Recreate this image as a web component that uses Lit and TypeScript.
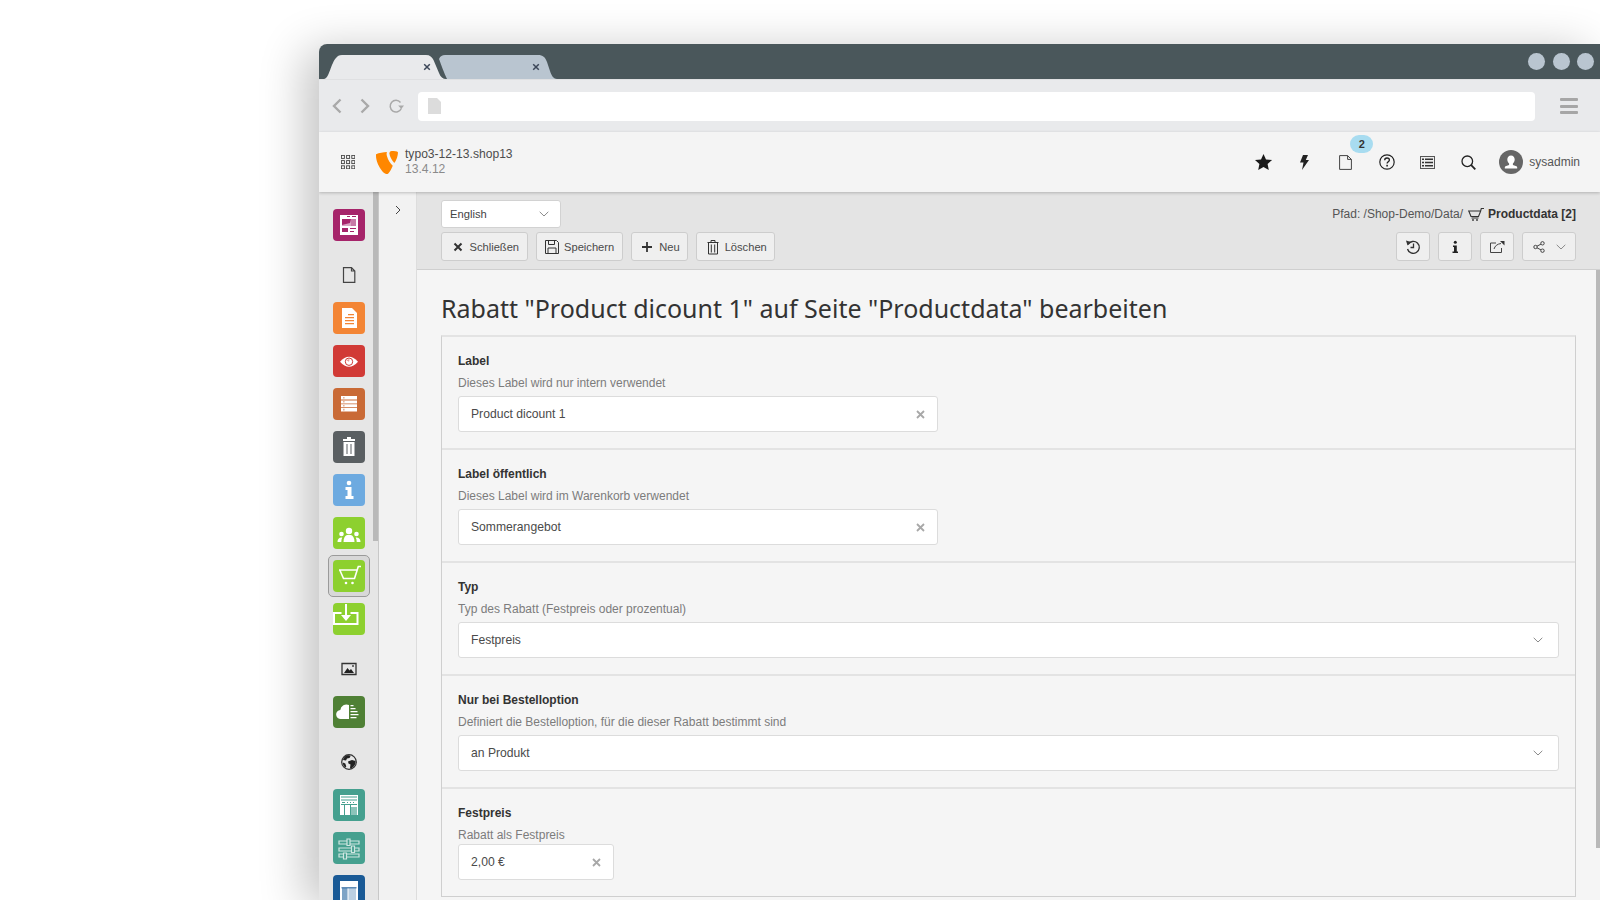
import { LitElement, html, css, svg } from "lit";
import { customElement } from "lit/decorators.js";

const tileIcons = {
  web: svg`<path d="M7 6h18v20H7z" fill="#fff"/><path d="M9 10h14v7H9z" fill="#d9a3c2"/><path d="M9 10h9l-1 4-8 2z" fill="#a6246a"/><path d="M18 10h5v7h-5z" fill="#c77aa6"/><path d="M9 19h6v4H9zM17 19h6v1h-6zM17 22h4v1h-4z" fill="#a6246a"/><path d="M14 7h3v1h-3zM19 7h4v1h-4z" fill="#a6246a"/>`,
  doc: svg`<path d="M9 6h10l5 5v15H9z" fill="#fff"/><path d="M12 15h9v1.300h-9zM12 18h9v1.300h-9zM12 21h9v1.300h-9zM15 12h6v1.300h-6z" fill="#f38535"/>`,
  eye: svg`<path d="M7 16.700c3-3.400 6-5 9-5s6 1.600 9 5c-3 3.400-6 5-9 5s-6-1.600-9-5z" fill="#fff"/><circle cx="16" cy="16.700" r="3.700" fill="#fff" stroke="#d13a36" stroke-width="1"/><path d="M13.800 15.500a2.400 2.400 0 0 1 2.800-1.200l-.6 2.400z" fill="#e99a97"/>`,
  list: svg`<path d="M8 8h16v15.500H8z" fill="#fff"/><path d="M8 11.600h16v.8H8zM8 15.400h16v.8H8zM8 19.200h16v.8H8z" fill="#c96a36"/><path d="M10.500 9h.8v1.600h-.8zM10.500 13h.8v1.600h-.8zM10.500 17h.8v1.600h-.8zM10.500 20.800h.8v1.600h-.8z" fill="#c96a36"/>`,
  trash: svg`<path d="M10 8h12v2h-12z M14 6h4v2h-4z" fill="#fff"/><path d="M10.500 11h11v14h-11z" fill="#fff"/><path d="M13.500 13h1v10h-1zM17.500 13h1v10h-1z" fill="#5a5f62"/>`,
  info: svg`<circle cx="16" cy="9" r="2.300" fill="#fff"/><path d="M12.500 13h6v9h2v3h-8v-3h2v-6h-2z" fill="#fff"/>`,
  users: svg`<circle cx="16" cy="14" r="3.200" fill="#fff"/><path d="M10.500 25c0-4 1.500-6.500 3.500-7h4c2 .5 3.500 3 3.500 7z" fill="#fff"/><circle cx="8.500" cy="17" r="2.300" fill="#fff"/><path d="M4.500 25c0-2.800 1.500-4.500 4-4.500h.8c-.7 1.300-1 2.800-1 4.500z" fill="#fff"/><circle cx="23.500" cy="17" r="2.300" fill="#fff"/><path d="M27.500 25c0-2.800-1.500-4.500-4-4.500h-.8c.7 1.300 1 2.800 1 4.500z" fill="#fff"/>`,
  cart: svg`<path d="M6 10h18M7 10.500l3.500 8h11l3-9.500.8-2.500H28" fill="none" stroke="#fff" stroke-width="1.600"/><circle cx="13" cy="23" r="1.300" fill="#fff"/><circle cx="19.500" cy="23" r="1.300" fill="#fff"/>`,
  import: svg`<path d="M0 10h8.500v2H2v9h21.500v-9h-6v-2H25.500v13H0z" fill="#fff" transform="translate(0 -1)"/><path d="M12 1h2v11h4l-5 6-5-6h4z" fill="#fff"/>`,
  cloud: svg`<path d="M8 23a4.500 4.500 0 0 1-.7-9 6.200 6.200 0 0 1 8.700-5v14z" fill="#fff"/><path d="M17.500 9h3v1.300h-3zM17.500 12h5v1.300h-5zM17.500 15h7v1.300h-7zM17.500 18h8v1.300h-8zM17.500 21h6v1.300h-6z" fill="#fff"/>`,
  form: svg`<path d="M7 6h18v20H7z" fill="#fff"/><path d="M8 7.500h16v1H8zM8 10.500h16v1H8z" fill="#45a08f"/><path d="M9 13h3v1H9zM14 13h1v1h-1zM17 13h1v1h-1zM20 13h1v1h-1zM8 15h16v1H8z" fill="#45a08f"/><path d="M11 16h1v10h-1zM17 16h1v10h-1z" fill="#45a08f"/><path d="M18 18h6v8h-6z" fill="#8cc4ba"/>`,
  sliders: svg`<path d="M6 9h20v3H6zM6 16h20v3H6zM6 22h20v3H6z" fill="none" stroke="#cfe6e1" stroke-width="1.200"/><path d="M14 7h3v6.500h-3zM18.500 14h3v6.500h-3zM10.500 21h3v6h-3z" fill="#45a08f" stroke="#cfe6e1" stroke-width="1.200"/>`,
  layout: svg`<path d="M7 6h18v23H7z" fill="#fff"/><path d="M9 13h5.500v14H9z" fill="#7ea4c6"/><path d="M15.500 13H23v14h-7.500z" fill="#bcd0e2"/><path d="M8.500 12.300h15v1h-15z" fill="#1a5a96"/>`,
};

const tiles: { k?: keyof typeof tileIcons; c?: string; plain?: string; active?: boolean }[] = [
  { k: "web", c: "#a6246a" },
  { plain: "page" },
  { k: "doc", c: "#f38535" },
  { k: "eye", c: "#d13a36" },
  { k: "list", c: "#c96a36" },
  { k: "trash", c: "#5a5f62" },
  { k: "info", c: "#6daae0" },
  { k: "users", c: "#8dd02f" },
  { k: "cart", c: "#8dd02f", active: true },
  { k: "import", c: "#8dd02f" },
  { plain: "image" },
  { k: "cloud", c: "#4f8035" },
  { plain: "globe" },
  { k: "form", c: "#45a08f" },
  { k: "sliders", c: "#45a08f" },
  { k: "layout", c: "#1a5a96" },
];

const plainIcons: Record<string, unknown> = {
  page: html`<svg width="14" height="16" viewBox="0 0 14 16"><path d="M1.500.7h8l3.300 3.300v11.300H1.500z M9.500.7V4h3.300" fill="none" stroke="#444" stroke-width="1.200"/></svg>`,
  image: html`<svg width="16" height="14" viewBox="0 0 16 14"><path d="M1 1.500h14v11H1z" fill="none" stroke="#333" stroke-width="1.300"/><path d="M3 11l3.500-5 2 2.500 1.500-1.500 3 4z" fill="#222"/><circle cx="12" cy="4" r="1" fill="#444"/></svg>`,
  globe: html`<svg width="16" height="16" viewBox="0 0 16 16"><circle cx="8" cy="8" r="7.300" fill="none" stroke="#333" stroke-width="1.200"/><path d="M5 1.800c2-.8 4-.5 4.500.5L8.500 4 6 4.500 5 6.500 2 6c.5-2 1.500-3.300 3-4.200zM7 7.500l4-1.500 3.500 1c.3 3-1 5.500-3 6.500L10 15l-1-1 .5-3.500L7.500 9.500zM1.800 8.500l2.500 1 1 3-1 1c-1.500-1-2.500-3-2.500-5z" fill="#222"/></svg>`,
};

const fields = [
  { label: "Label", desc: "Dieses Label wird nur intern verwendet", value: "Product dicount 1", type: "input" },
  { label: "Label öffentlich", desc: "Dieses Label wird im Warenkorb verwendet", value: "Sommerangebot", type: "input" },
  { label: "Typ", desc: "Typ des Rabatt (Festpreis oder prozentual)", value: "Festpreis", type: "select" },
  { label: "Nur bei Bestelloption", desc: "Definiert die Bestelloption, für die dieser Rabatt bestimmt sind", value: "an Produkt", type: "select" },
  { label: "Festpreis", desc: "Rabatt als Festpreis", value: "2,00 €", type: "price" },
];

const chevron = html`<svg width="10" height="6" viewBox="0 0 10 6"><path d="M.7.8 5 5 9.300.8" fill="none" stroke="#8a8a8a" stroke-width="1"/></svg>`;
const clearX = html`<svg width="9" height="9" viewBox="0 0 9 9"><path d="M1 1l7 7M8 1 1 8" stroke="#a8a8a8" stroke-width="1.800"/></svg>`;
const tabX = html`<svg width="8" height="8" viewBox="0 0 8 8"><path d="M1.200 1.200l5.600 5.600M6.800 1.200 1.200 6.800" stroke="#3c4759" stroke-width="1.500"/></svg>`;
const cartSmall = html`<svg width="16" height="13" viewBox="0 0 16 13"><path d="M0 3h12.500M1 3.500l2 5h7.500l2-5 .8-3H16M3.500 10h7" fill="none" stroke="#333" stroke-width="1.100"/><circle cx="5" cy="12" r=".9" fill="#333"/><circle cx="9" cy="12" r=".9" fill="#333"/></svg>`;

@customElement("app-root")
export class AppRoot extends LitElement {
  static styles = css`
    :host { display: block; height: 900px; overflow: hidden; background: #fff; font-family: "Liberation Sans", Arial, sans-serif; padding: 44px 0 0 319px; box-sizing: border-box; }
    .win { height: 856px; display: flex; flex-direction: column; border-radius: 8px 0 0 0; box-shadow: -14px 6px 46px rgba(0,0,0,.24); background: #f5f5f5; overflow: hidden; }
    .chrome { height: 35px; flex: none; background: #4a575b; display: flex; align-items: flex-end; padding-left: 5px; }
    .tab { height: 24px; position: relative; flex: none; display: flex; align-items: center; justify-content: flex-end; box-sizing: border-box; }
    .tab svg.bg { position: absolute; inset: 0; }
    .tab svg:not(.bg) { position: relative; }
    .tab1 { width: 122px; z-index: 1; padding-right: 15px; }
    .tab2 { width: 118px; margin-left: -7px; padding-right: 17px; padding-bottom: 1px; }
    .dots { margin-left: auto; display: flex; gap: 7.500px; padding-right: 6px; align-self: center; }
    .dots i { width: 17px; height: 17px; border-radius: 50%; background: #b9c5d0; display: block; }
    .toolbar { height: 53px; flex: none; background: #e9eaec; display: flex; align-items: center; border-top: 1px solid #dfe0e2; box-sizing: border-box; padding-left: 13px; }
    .nav { display: flex; align-items: center; gap: 18px; width: 86px; }
    .addr { width: 1117px; height: 29px; background: #fff; border-radius: 4px; display: flex; align-items: center; padding-left: 10px; box-sizing: border-box; }
    .burger { margin-left: 25px; display: flex; flex-direction: column; gap: 3.500px; }
    .burger i { display: block; width: 18px; height: 3px; background: #a6a6a6; border-radius: 1px; }
    .top { height: 60px; flex: none; background: #f4f4f4; display: flex; align-items: center; padding: 0 20px 0 22px; position: relative; z-index: 2; box-shadow: 0 1px 3px rgba(0,0,0,.22); }
    .brand { margin-left: 21px; display: flex; align-items: center; gap: 7px; }
    .brandtxt { font-size: 12.100px; line-height: 14.500px; color: #4d4d4d; margin-top: -1px; }
    .brandtxt small { display: block; font-size: 12.100px; color: #8a8a8a; }
    .tools { margin-left: auto; display: flex; align-items: center; }
    .slot { width: 41px; display: flex; justify-content: center; position: relative; }
    .badge { position: absolute; left: 25px; top: -20px; width: 23px; height: 18px; border-radius: 9px; background: #a8dcf0; color: #333; font-size: 11px; font-weight: 700; display: flex; align-items: center; justify-content: center; }
    .user { margin-left: 10px; display: flex; align-items: center; gap: 6px; font-size: 12px; color: #555; }
    .main { flex: 1; min-height: 0; display: flex; }
    .menu { width: 60px; flex: none; background: #e6e6e6; position: relative; border-right: 1px solid #c8c8c8; box-sizing: border-box; display: flex; flex-direction: column; align-items: center; gap: 11px; padding-top: 17px; overflow: hidden; isolation: isolate; }
    .menu .sb { position: absolute; right: 0; top: 0; width: 5px; height: 349px; background: #b9b9b9; }
    .tile { width: 32px; height: 32px; border-radius: 4px; flex: none; display: flex; position: relative; }
    .tile svg { display: block; }
    .tile.on::after { content: ""; position: absolute; inset: -5px; border: 1px solid #9a9a9a; border-radius: 5px; background: rgba(0,0,0,.06); z-index: -1; }
    .plain { width: 32px; height: 32px; flex: none; margin-top: 7px; display: flex; align-items: center; justify-content: center; }
    .rail { width: 38px; flex: none; background: #f2f2f2; border-right: 1px solid #ddd; box-sizing: border-box; display: flex; justify-content: center; padding-top: 13px; }
    .rail svg { display: block; }
    .content { flex: 1; min-width: 0; display: flex; flex-direction: column; }
    .doc { height: 78px; flex: none; background: #e4e4e4; border-bottom: 1px solid #cfcfcf; box-sizing: border-box; padding: 8px 24px 0 24px; display: flex; flex-direction: column; gap: 4px; }
    .row { display: flex; justify-content: space-between; align-items: center; }
    .lang { width: 120px; height: 28px; box-sizing: border-box; background: #fff; border: 1px solid #d2d2d2; border-radius: 3px; display: flex; align-items: center; justify-content: space-between; padding: 0 11px 0 8px; font-size: 11.200px; color: #444; }
    .path { font-size: 12px; color: #555; display: flex; align-items: center; gap: 5px; }
    .path b { color: #333; margin-left: -1px; }
    .btns { display: flex; gap: 8px; }
    .btn { height: 29px; box-sizing: border-box; background: #efefef; border: 1px solid #cdcdcd; border-radius: 3px; display: flex; align-items: center; gap: 4px; padding: 0 7.500px; font-size: 11.150px; color: #4a4a4a; flex: none; }
    .btn.sq { width: 34px; padding: 0; justify-content: center; }
    .btn.sh { width: 54px; padding: 0; justify-content: center; gap: 11px; }
    .body { flex: 1; min-height: 0; position: relative; padding: 0 24px; background: #f5f5f5; overflow: hidden; }
    .sbar { position: absolute; right: 0; top: 0; width: 4px; height: 578px; background: #b9b9b9; }
    h1 { margin: 0; height: 65px; display: flex; align-items: center; font: 400 25px "Noto Sans", sans-serif; color: #333; padding-top: 11px; box-sizing: border-box; }
    .panel { border: 1px solid #cfcfcf; border-top: 2px solid #e3e3e3; }
    .sec { padding: 17px 16px 16px 16px; border-bottom: 2px solid #e3e3e3; }
    .sec:last-child { border-bottom: 0; }
    .lab { font-size: 12px; font-weight: 700; line-height: 14px; color: #333; margin-bottom: 8px; }
    .desc { font-size: 12px; line-height: 14px; color: #7c7c7c; margin-bottom: 6px; }
    .sec:last-child .desc { margin-bottom: 2px; }
    .ctl { height: 36px; box-sizing: border-box; background: #fff; border: 1.500px solid #dcdcdc; border-radius: 3px; display: flex; align-items: center; justify-content: space-between; padding: 0 12px; font-size: 12.150px; color: #4a4a4a; }
    .ctl.input { width: 480px; }
    .ctl.price { width: 156px; }
    .ctl.select { padding-right: 15px; }
  `;

  render() {
    return html`
      <div class="win">
        <div class="chrome">
          <div class="tab tab1">
            <svg class="bg" width="122" height="24" viewBox="0 0 122 24"><path d="M0 24C5 24 7 8 12 3 13.500 1 15 0 18 0H102C106 0 108 2 109.500 5L115 18C116.500 22 119 24 122 24Z" fill="#e9eaec"/></svg>
            ${tabX}
          </div>
          <div class="tab tab2">
            <svg class="bg" width="118" height="24" viewBox="0 0 118 24"><path d="M0 4C1.500 1 3 0 6 0H99C104 0 106 2 108 7L111 16C112.500 21 115 24 118 24H8C5 18 2 9 0 4Z" fill="#b9c5d0"/></svg>
            ${tabX}
          </div>
          <div class="dots"><i></i><i></i><i></i></div>
        </div>
        <div class="toolbar">
          <div class="nav">
            <svg width="10" height="16" viewBox="0 0 10 16"><path d="M8.500 1.500 2 8l6.500 6.500" fill="none" stroke="#a9a9a9" stroke-width="2.400"/></svg>
            <svg width="10" height="16" viewBox="0 0 10 16"><path d="M1.500 1.500 8 8l-6.500 6.500" fill="none" stroke="#a9a9a9" stroke-width="2.400"/></svg>
            <svg width="16" height="16" viewBox="0 0 16 16"><path d="M13.300 10.500A5.800 5.800 0 1 1 12.500 4.500" fill="none" stroke="#a9a9a9" stroke-width="1.500"/><path d="M10.200 7.500H16L13.300 11z" fill="#a9a9a9"/></svg>
          </div>
          <div class="addr">
            <svg width="13" height="16" viewBox="0 0 13 16"><path d="M0 0h9l4 4v12H0z" fill="#dcdcdc"/></svg>
          </div>
          <div class="burger"><i></i><i></i><i></i></div>
        </div>
        <div class="top">
          <svg width="14" height="14" viewBox="0 0 14 14">
            ${[0, 5.2, 10.4].map((y) => [0, 5.2, 10.4].map((x) => svg`<rect x="${x + 0.4}" y="${y + 0.4}" width="3" height="3" fill="none" stroke="#444" stroke-width=".9"/>`))}
          </svg>
          <div class="brand">
            <svg width="22" height="23" viewBox="0 0 21 22"><path d="M0 3C3 1.800 7 1.200 10.500 1 10 2 10 3.500 10.500 5 11.500 8.500 13.500 12 16 14 14.500 18 12 22 10.500 22 6 22 0 11 0 5Z" fill="#ff8700"/><path d="M15 0C18 0 21 .4 21 1.500 21 4.500 19.500 9 17.500 11.500 15 9 13 5 12.800 2.500 12.800 1 13.500 0 15 0Z" fill="#ff8700"/></svg>
            <div class="brandtxt">typo3-12-13.shop13<small>13.4.12</small></div>
          </div>
          <div class="tools">
            <div class="slot"><svg width="17" height="16" viewBox="0 0 17 16"><path d="M8.500 0l2.500 5.400 6 .7-4.400 4 1.200 5.900-5.300-3-5.300 3 1.200-5.900L.0 6.100l6-.7z" fill="#1a1a1a"/></svg></div>
            <div class="slot"><svg width="9" height="15" viewBox="0 0 9 15"><path d="M3 0h5L5.800 5H9L2 15l1.500-7.500H0z" fill="#222"/></svg></div>
            <div class="slot"><svg width="13" height="15" viewBox="0 0 13 15"><path d="M.6.600h8l3.800 3.800v10H.6z M8.600.6v3.800h3.800" fill="none" stroke="#444" stroke-width="1"/></svg><span class="badge">2</span></div>
            <div class="slot"><svg width="16" height="16" viewBox="0 0 16 16"><circle cx="8" cy="8" r="7.200" fill="none" stroke="#222" stroke-width="1.200"/><path d="M5.700 6.200C5.700 4.800 6.700 4 8 4s2.400.8 2.400 2.100c0 1.700-2.300 1.800-2.300 3.500" fill="none" stroke="#222" stroke-width="1.300"/><rect x="7.300" y="10.800" width="1.600" height="1.700" fill="#222"/></svg></div>
            <div class="slot"><svg width="15" height="13" viewBox="0 0 15 13"><path d="M0 0h15v13H0z" fill="#555"/><path d="M1 1h13v11H1z" fill="#eee"/><path d="M2 2.500h2v1.500H2zM5 2.500h8v1.500H5zM2 5.700h2v1.500H2zM5 5.700h8v1.500H5zM2 9h2v1.500H2zM5 9h8v1.500H5z" fill="#333"/></svg></div>
            <div class="slot"><svg width="15" height="15" viewBox="0 0 15 15"><circle cx="6.300" cy="6.300" r="5.300" fill="none" stroke="#222" stroke-width="1.300"/><path d="M10.200 10.200 14.300 14.300" stroke="#222" stroke-width="1.800"/></svg></div>
            <div class="user">
              <svg width="24" height="24" viewBox="0 0 24 24"><circle cx="12" cy="12" r="12" fill="#666"/><path d="M12 5.500c2.300 0 3.700 1.700 3.700 4 0 1.700-.8 3.300-1.800 4v1.500l3.600 1.300c.5.200.7.600.7 1.200V18.500H5.800V17.500c0-.6.200-1 .7-1.200L10.100 15v-1.500c-1-.7-1.800-2.300-1.800-4 0-2.300 1.400-4 3.700-4z" fill="#fff"/></svg>
              sysadmin
            </div>
          </div>
        </div>
        <div class="main">
          <div class="menu">
            <div class="sb"></div>
            ${tiles.map((t) =>
              t.plain
                ? html`<div class="plain">${plainIcons[t.plain]}</div>`
                : html`<div class="tile ${t.active ? "on" : ""}" style="background:${t.c}"><svg width="32" height="32" viewBox="0 0 32 32">${tileIcons[t.k!]}</svg></div>`
            )}
          </div>
          <div class="rail"><svg width="6" height="10" viewBox="0 0 6 10"><path d="M1 1l4 4-4 4" fill="none" stroke="#444" stroke-width="1"/></svg></div>
          <div class="content">
            <div class="doc">
              <div class="row">
                <div class="lang">English ${chevron}</div>
                <div class="path">Pfad: /Shop-Demo/Data/ ${cartSmall}<b>Productdata [2]</b></div>
              </div>
              <div class="row">
                <div class="btns">
                  <div class="btn"><svg width="16" height="16" viewBox="0 0 16 16"><path d="M4.500 4.500l7 7M11.500 4.500l-7 7" stroke="#333" stroke-width="2"/></svg>Schließen</div>
                  <div class="btn"><svg width="16" height="16" viewBox="0 0 16 16"><path d="M1.500 1.500h11l2 2v11h-13z M4.500 1.500v4h6v-4M4 14.500V9h8v5.500" fill="none" stroke="#333" stroke-width="1"/></svg>Speichern</div>
                  <div class="btn"><svg width="16" height="16" viewBox="0 0 16 16"><path d="M8 3v10M3 8h10" stroke="#333" stroke-width="1.800"/></svg>Neu</div>
                  <div class="btn"><svg width="16" height="16" viewBox="0 0 16 16"><path d="M2.500 3.500h11M6 3.500v-2h4v2M3.500 3.500v11.500h9V3.500M6.300 5.500v8M9.700 5.500v8" fill="none" stroke="#333" stroke-width="1"/></svg>Löschen</div>
                </div>
                <div class="btns">
                  <div class="btn sq"><svg width="16" height="16" viewBox="0 0 16 16"><path d="M3 5.500A6 6 0 1 1 2.500 10" fill="none" stroke="#333" stroke-width="1.400"/><path d="M1 1.500l5 1.500L2.500 6.500z" fill="#333"/><path d="M8.500 4.500V8.500H5.500" fill="none" stroke="#333" stroke-width="1.300"/></svg></div>
                  <div class="btn sq"><svg width="16" height="16" viewBox="0 0 16 16"><circle cx="8.300" cy="3.200" r="1.500" fill="#222"/><path d="M6 6.500h3.800v6H11v1.500H5.500v-1.500h1.500V8H6z" fill="#222"/></svg></div>
                  <div class="btn sq"><svg width="16" height="16" viewBox="0 0 16 16"><path d="M7 4H1.500v9.500h11V9" fill="none" stroke="#444" stroke-width="1"/><path d="M5 10c1-3 3-5 7-5.500" fill="none" stroke="#444" stroke-width="1"/><path d="M11 2h4.500v4.500z" fill="#333"/></svg></div>
                  <div class="btn sh"><svg width="12" height="12" viewBox="0 0 12 12"><circle cx="2.500" cy="6" r="1.700" fill="none" stroke="#444"/><circle cx="9.500" cy="2.300" r="1.700" fill="none" stroke="#444"/><circle cx="9.500" cy="9.700" r="1.700" fill="none" stroke="#444"/><path d="M4 5.200l4-2.100M4 6.800l4 2.100" stroke="#444"/></svg>${chevron}</div>
                </div>
              </div>
            </div>
            <div class="body">
              <div class="sbar"></div>
              <h1>Rabatt "Product dicount 1" auf Seite "Productdata" bearbeiten</h1>
              <div class="panel">
                ${fields.map(
                  (f) => html`<div class="sec">
                    <div class="lab">${f.label}</div>
                    <div class="desc">${f.desc}</div>
                    <div class="ctl ${f.type}">${f.value}${f.type === "select" ? chevron : clearX}</div>
                  </div>`
                )}
              </div>
            </div>
          </div>
        </div>
      </div>
    `;
  }
}
